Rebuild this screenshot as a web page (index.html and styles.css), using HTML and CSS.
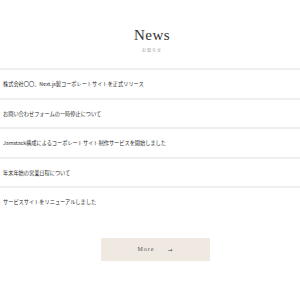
FILE: index.html
```html
<!DOCTYPE html>
<html lang="ja">
  <head>
    <meta charset="UTF-8" />
    <meta name="viewport" content="width=device-width, initial-scale=1.0" />
    <title>News</title>
    <link rel="stylesheet" href="styles.css">
  </head>
  <body>
    <section class="news">
      <div class="heading">
        <h2 class="title">News</h2>
        <p class="subtitle">お知らせ</p>
      </div>

      <ul class="news-list">
        <li class="news-item">株式会社〇〇、Next.js製コーポレートサイトを正式リリース</li>
        <li class="news-item">お問い合わせフォームの一時停止について</li>
        <li class="news-item">Jamstack構成によるコーポレートサイト制作サービスを開始しました</li>
        <li class="news-item">年末年始の営業日程について</li>
        <li class="news-item">サービスサイトをリニューアルしました</li>
      </ul>

      <div class="more-wrap">
        <a class="more" href="#">More <span class="arrow">→</span></a>
      </div>
    </section>
  </body>
</html>
```

FILE: styles.css
```css
body {
  margin: 0;
  background: #ffffff;
  font-family: "Noto Sans CJK JP", "Noto Sans", sans-serif;
  color: #333333;
}

.news {
  padding-top: 26px;
}

.heading {
  text-align: center;
  padding-left: 4px;
  margin-bottom: 15px;
}

.title {
  margin: 0;
  font-family: "Liberation Serif", serif;
  font-weight: normal;
  font-size: 15px;
  line-height: 18px;
  letter-spacing: 0.5px;
  color: #333333;
}

.subtitle {
  margin: 3px 0 0;
  font-size: 4px;
  line-height: 6px;
  letter-spacing: 1px;
  color: #999999;
}

.news-list {
  list-style: none;
  margin: 0;
  padding: 0;
}

.news-item {
  border-top: 2px solid #efefef;
  height: 27.5px;
  padding-left: 3px;
  display: flex;
  align-items: center;
  font-size: 5.2px;
  color: #2a2a2a;
  white-space: nowrap;
}

.more-wrap {
  display: flex;
  justify-content: center;
  padding-left: 11px;
  margin-top: 22px;
}

.more {
  display: flex;
  align-items: center;
  justify-content: center;
  gap: 13px;
  width: 109px;
  height: 23px;
  background: #efe9e1;
  color: #555555;
  text-decoration: none;
  font-family: "Liberation Serif", serif;
  font-size: 6px;
  letter-spacing: 1px;
}

.arrow {
  font-family: "DejaVu Sans", sans-serif;
  font-size: 6px;
}
```
